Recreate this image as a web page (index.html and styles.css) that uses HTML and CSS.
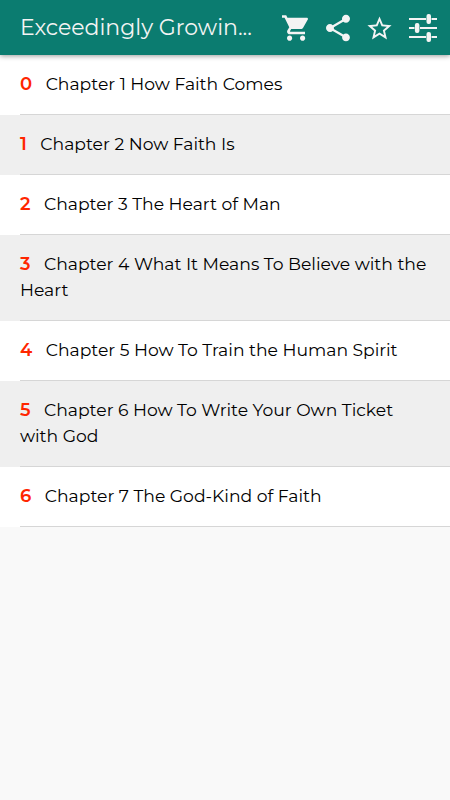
FILE: index.html
```html
<!DOCTYPE html>
<html lang="en">
<head>
    <meta charset="UTF-8">
    <meta name="viewport" content="width=device-width, initial-scale=1">
    <title>Exceedingly Growing Faith</title>
    <link rel="stylesheet" href="styles.css">
</head>
<body>
    <header class="toolbar">
        <h1 class="title">Exceedingly Growin...</h1>
        <div class="actions">
            <button class="icon-button" aria-label="Cart">
                <svg viewBox="0 0 512 512"><path d="M169.6 377.6c-22.9 0-41.6 18.7-41.6 41.6s18.7 41.6 41.6 41.6 41.6-18.7 41.6-41.6-18.7-41.6-41.6-41.6zM48 51.2v41.6h41.6l74.9 151.7-31.3 51c-2.1 5.2-4.2 12.5-4.2 18.7 0 22.9 19.8 41.6 41.6 41.6H416v-41.6H180.8c-3.1 0-5.2-2.1-5.2-5.2 0-1 0-2.1 1-3.1l18-33.3h155c16.6 0 29.1-8.3 36.4-21.8l74.9-129c3.1-4.1 3.1-6.2 3.1-10.4 0-12.5-9.4-20.8-20.8-20.8H135.2l-19.7-39.4H48zm329.6 326.4c-22.9 0-41.6 18.7-41.6 41.6s18.7 41.6 41.6 41.6 41.6-18.7 41.6-41.6-18.7-41.6-41.6-41.6z"/></svg>
            </button>
            <button class="icon-button" aria-label="Share">
                <svg viewBox="0 0 512 512"><path d="M383.8 344.4c-16 0-31 5.3-41.7 16l-153-88.4c1.1-5.3 2.2-9.6 2.2-14.9s-1.1-9.6-2.2-14.9L340 154.8c11.7 10.7 26.7 17.1 43.8 17.1 35.3 0 64.2-28.8 64.2-64S419.1 44 383.8 44s-64.2 28.8-64.2 63.9c0 5.3 1.1 9.6 2.2 14.9L171 210.2c-11.8-10.7-26.8-17.1-43.9-17.1-35.3 0-63.1 28.8-63.1 64s28.9 63.9 64.2 63.9c17.1 0 32.1-6.4 43.9-17l151.9 88.4c-1.1 4.3-2.2 8.5-2.2 13.8 0 34.1 27.8 61.8 62 61.8s62.1-27.7 62.1-61.8-27.8-61.8-62.1-61.8z"/></svg>
            </button>
            <button class="icon-button star" aria-label="Favorite">
                <svg viewBox="0 0 24 24"><path d="M22 9.24l-7.19-.62L12 2 9.19 8.63 2 9.24l5.46 4.73L5.82 21 12 17.27 18.18 21l-1.63-7.03L22 9.24zM12 15.4l-3.76 2.27 1-4.28-3.32-2.88 4.38-.38L12 6.1l1.71 4.04 4.38.38-3.32 2.88 1 4.28L12 15.4z"/></svg>
            </button>
            <button class="icon-button" aria-label="Options">
                <svg viewBox="0 0 32 32">
                    <path d="M2 6h17v2H2zM24.5 6H30v2h-5.5zM2 15h5.5v2H2zM13 15h17v2H13zM2 24h17v2H2zM24.5 24H30v2h-5.5z"/>
                    <rect x="19.5" y="2" width="4.5" height="10" rx="2"/>
                    <rect x="7.9" y="11" width="4.5" height="10" rx="2"/>
                    <rect x="19.5" y="20" width="4.5" height="10" rx="2"/>
                </svg>
            </button>
        </div>
    </header>

    <main class="chapters">
        <a class="chapter"><span class="number">0</span>Chapter 1 How Faith Comes</a>
        <a class="chapter"><span class="number">1</span>Chapter 2 Now Faith Is</a>
        <a class="chapter"><span class="number">2</span>Chapter 3 The Heart of Man</a>
        <a class="chapter"><span class="number">3</span>Chapter 4 What It Means To Believe with the Heart</a>
        <a class="chapter"><span class="number">4</span>Chapter 5 How To Train the Human Spirit</a>
        <a class="chapter"><span class="number">5</span>Chapter 6 How To Write Your Own Ticket<br>with God</a>
        <a class="chapter"><span class="number">6</span>Chapter 7 The God-Kind of Faith</a>
    </main>
</body>
</html>
```

FILE: styles.css
```css
* {
    box-sizing: border-box;
}
body {
    margin: 0;
    min-height: 100vh;
    background-color: #f9f9f9;
    font-family: Montserrat, Inter, sans-serif;
    color: #000;
}
.toolbar {
    position: relative;
    display: flex;
    align-items: center;
    height: 55px;
    padding: 0 11.5px 0 20px;
    background-color: #0b7c70;
    box-shadow: 0 1px 5px rgba(0, 0, 0, 0.4);
}
.title {
    flex: 1;
    margin: 0;
    font-size: 22px;
    font-weight: 400;
    white-space: nowrap;
    color: #f4f4f4;
}
.actions {
    display: flex;
    gap: 10.4px;
}
.icon-button {
    width: 32px;
    height: 32px;
    padding: 0;
    border: none;
    background: none;
}
.icon-button svg {
    display: block;
    width: 32px;
    height: 32px;
    fill: #f4f4f4;
}
.star svg {
    width: 29px;
    height: 29px;
    margin: 2px 0 0 1px;
}
.chapter {
    display: block;
    padding: 16px 20px 18px;
    background: linear-gradient(#d6d6d6, #d6d6d6) 20px 100% / 100% 1px no-repeat #fff;
    font-size: 17.2px;
    line-height: 26px;
}
.chapter:nth-child(even) {
    background-color: #efefef;
}
.number {
    margin-right: 13.5px;
    font-size: 18px;
    line-height: 1;
    font-weight: 600;
    color: #ff2600;
}
```
